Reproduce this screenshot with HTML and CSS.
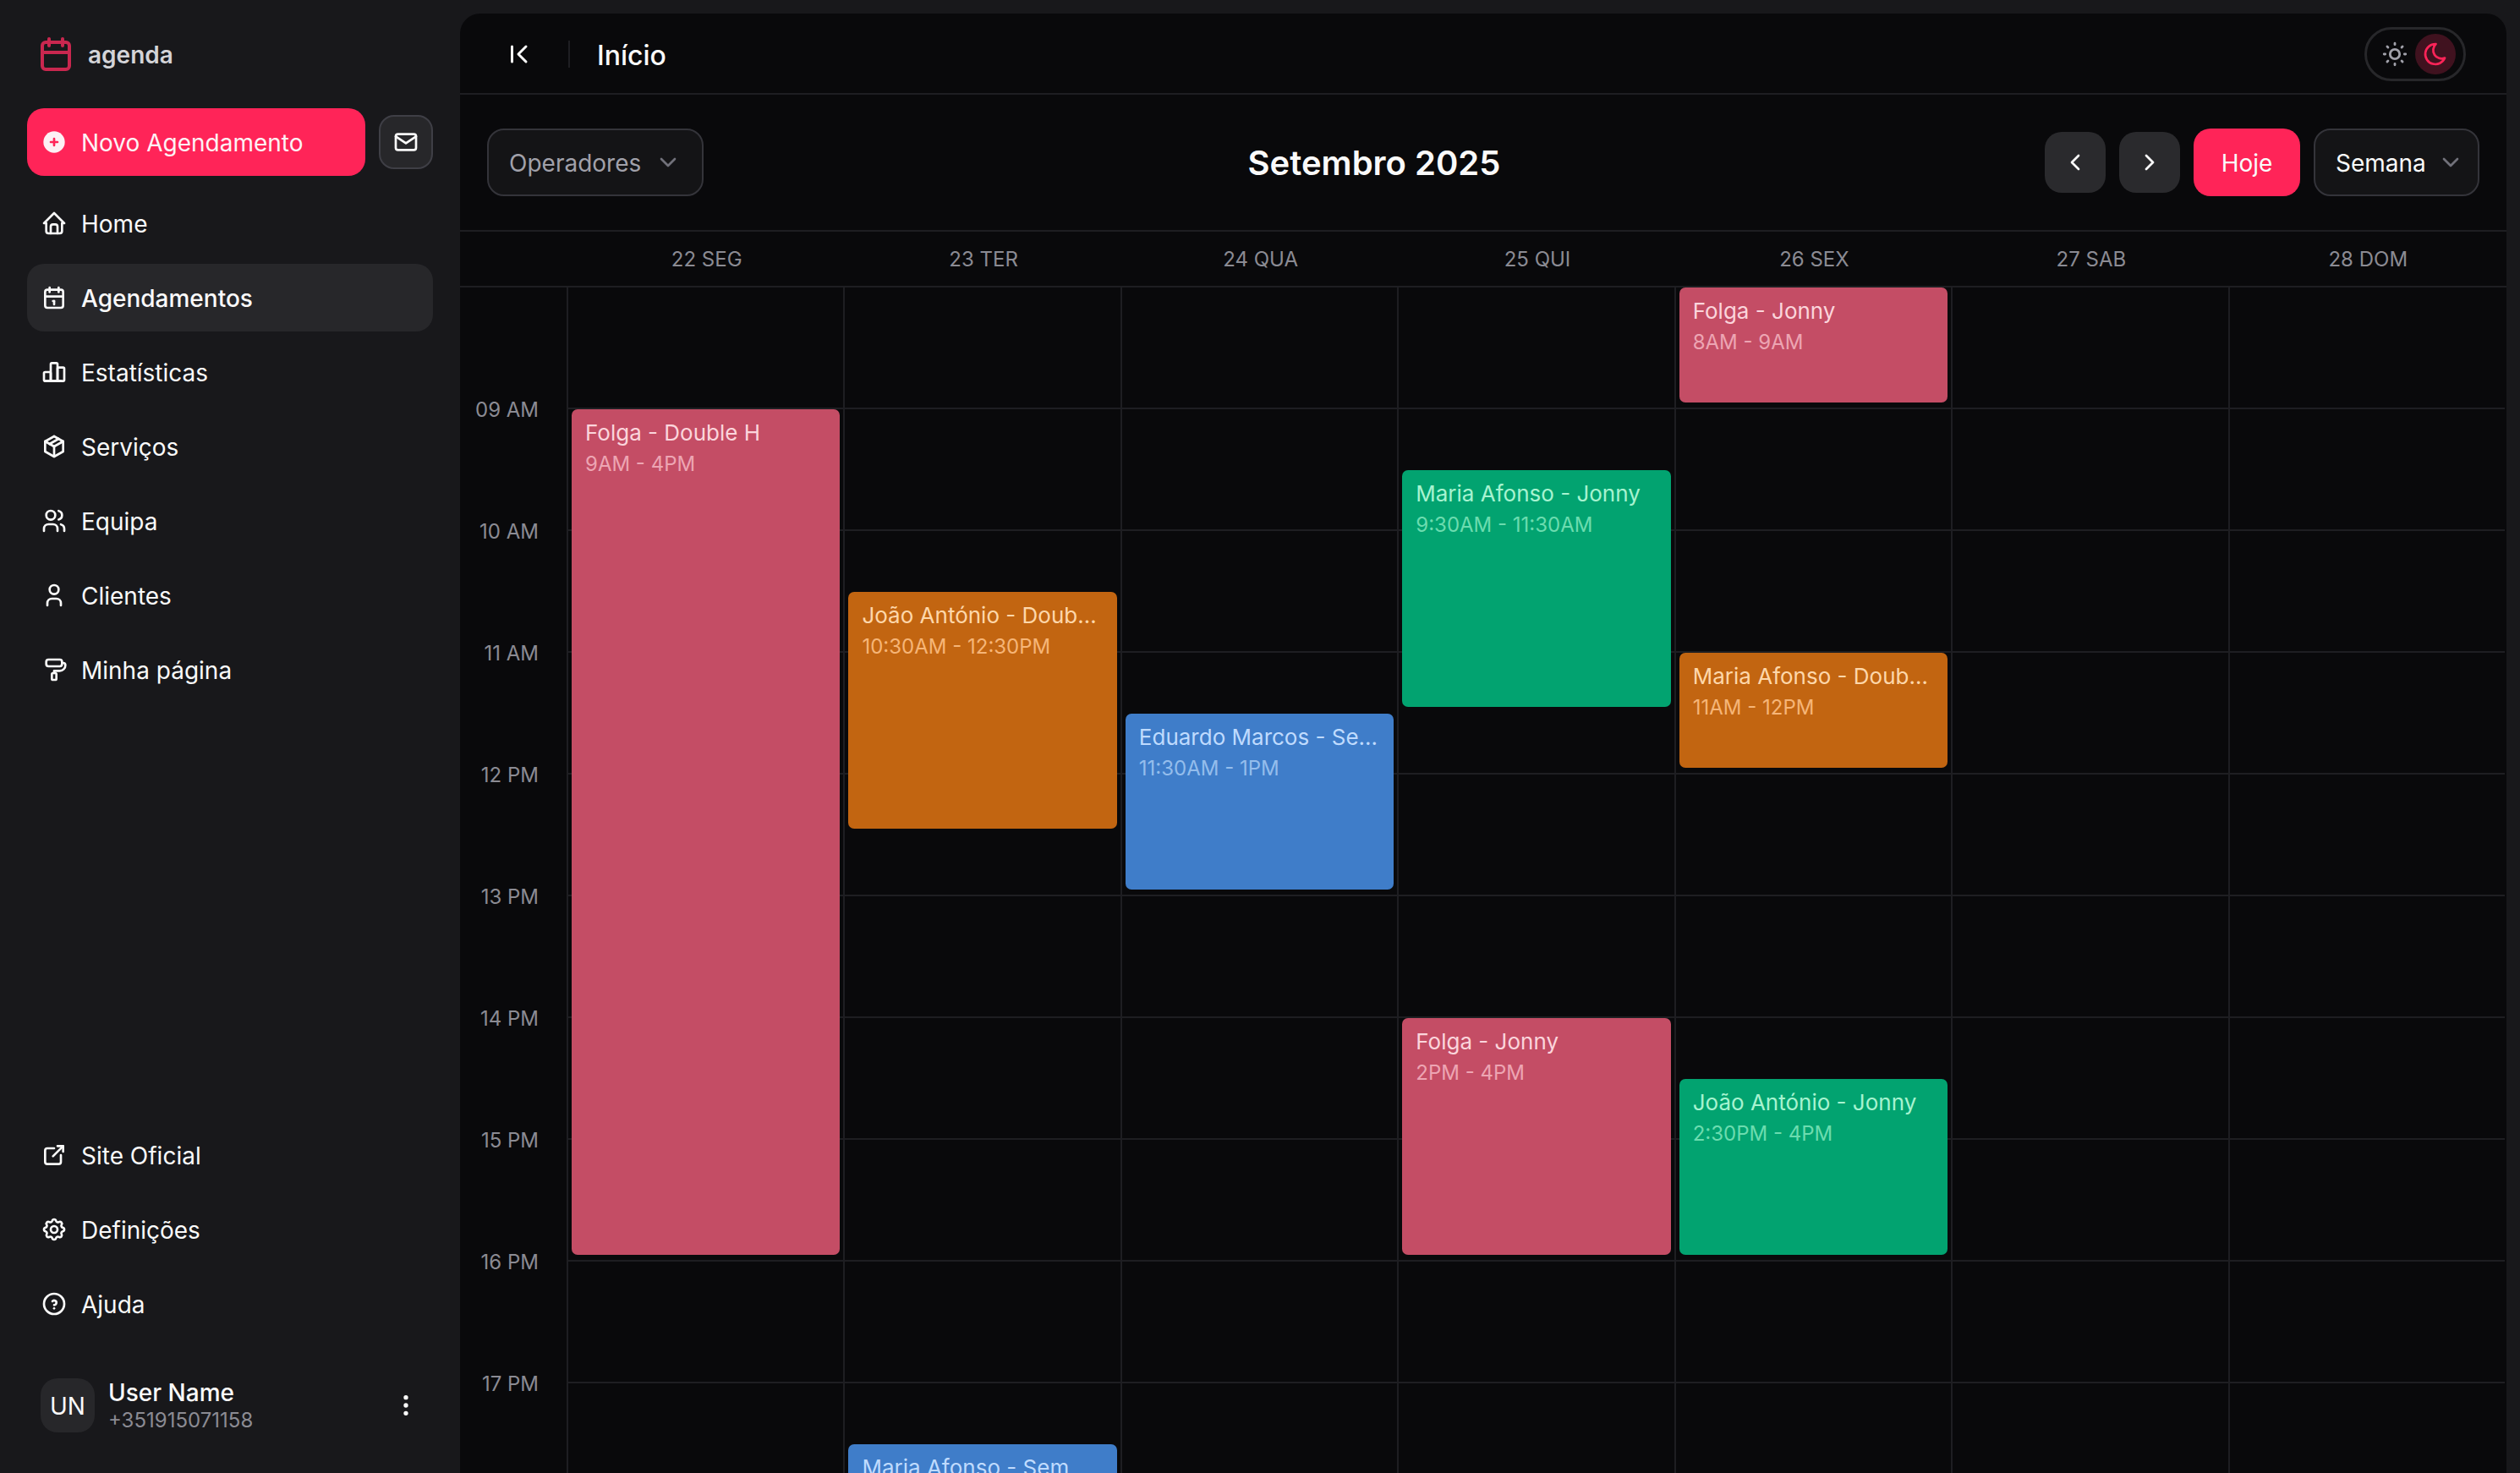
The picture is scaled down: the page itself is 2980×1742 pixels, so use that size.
FILE: index.html
```html
<!DOCTYPE html>
<html lang="pt">
<head>
<meta charset="utf-8">
<title>agenda</title>
<link rel="stylesheet" href="styles.css">
</head>
<body>
<div class="app">
  <aside class="sidebar">
    <div class="brand">
      <svg class="logo" viewBox="0 0 24 24"><path d="M4 7a2 2 0 0 1 2 -2h12a2 2 0 0 1 2 2v12a2 2 0 0 1 -2 2h-12a2 2 0 0 1 -2 -2z"/><path d="M16 3v4"/><path d="M8 3v4"/><path d="M4 11h16"/></svg>
      <span class="brand-name label">agenda</span>
    </div>
    <div class="new-row">
      <button class="new-btn">
        <svg class="icon" viewBox="0 0 24 24"><circle class="plus-disc" cx="12" cy="12" r="9.5"/><path class="plus-mark" d="M12 9v6M9 12h6"/></svg>
        <span class="label">Novo Agendamento</span>
      </button>
      <button class="mail-btn">
        <svg class="icon" viewBox="0 0 24 24"><path d="M3 7a2 2 0 0 1 2 -2h14a2 2 0 0 1 2 2v10a2 2 0 0 1 -2 2h-14a2 2 0 0 1 -2 -2v-10z"/><path d="M3 7l9 6l9 -6"/></svg>
      </button>
    </div>
    <nav class="nav">
      <a class="nav-item"><svg class="icon" viewBox="0 0 24 24"><path d="M5 12l-2 0l9 -9l9 9l-2 0"/><path d="M5 12v7a2 2 0 0 0 2 2h10a2 2 0 0 0 2 -2v-7"/><path d="M9 21v-6a2 2 0 0 1 2 -2h2a2 2 0 0 1 2 2v6"/></svg><span class="label">Home</span></a>
      <a class="nav-item active"><svg class="icon" viewBox="0 0 24 24"><path d="M4 7a2 2 0 0 1 2 -2h12a2 2 0 0 1 2 2v12a2 2 0 0 1 -2 2h-12a2 2 0 0 1 -2 -2z"/><path d="M16 3v4"/><path d="M8 3v4"/><path d="M4 11h16"/><path d="M11 15h1"/><path d="M12 15v3"/></svg><span class="label">Agendamentos</span></a>
      <a class="nav-item"><svg class="icon" viewBox="0 0 24 24"><path d="M3 13a1 1 0 0 1 1 -1h4a1 1 0 0 1 1 1v6a1 1 0 0 1 -1 1h-4a1 1 0 0 1 -1 -1z"/><path d="M15 9a1 1 0 0 1 1 -1h4a1 1 0 0 1 1 1v10a1 1 0 0 1 -1 1h-4a1 1 0 0 1 -1 -1z"/><path d="M9 5a1 1 0 0 1 1 -1h4a1 1 0 0 1 1 1v14a1 1 0 0 1 -1 1h-4a1 1 0 0 1 -1 -1z"/><path d="M4 20h14"/></svg><span class="label">Estatísticas</span></a>
      <a class="nav-item"><svg class="icon" viewBox="0 0 24 24"><path d="M12 3l8 4.5v9l-8 4.5l-8 -4.5v-9l8 -4.5"/><path d="M12 12l8 -4.5"/><path d="M12 12v9"/><path d="M12 12l-8 -4.5"/><path d="M16 5.25l-8 4.5"/></svg><span class="label">Serviços</span></a>
      <a class="nav-item"><svg class="icon" viewBox="0 0 24 24"><path d="M5 7a4 4 0 1 0 8 0a4 4 0 1 0 -8 0"/><path d="M3 21v-2a4 4 0 0 1 4 -4h4a4 4 0 0 1 4 4v2"/><path d="M16 3.13a4 4 0 0 1 0 7.75"/><path d="M21 21v-2a4 4 0 0 0 -3 -3.85"/></svg><span class="label">Equipa</span></a>
      <a class="nav-item"><svg class="icon" viewBox="0 0 24 24"><path d="M8 7a4 4 0 1 0 8 0a4 4 0 0 0 -8 0"/><path d="M6 21v-2a4 4 0 0 1 4 -4h4a4 4 0 0 1 4 4v2"/></svg><span class="label">Clientes</span></a>
      <a class="nav-item"><svg class="icon" viewBox="0 0 24 24"><path d="M5 5a2 2 0 0 1 2 -2h10a2 2 0 0 1 2 2v2a2 2 0 0 1 -2 2h-10a2 2 0 0 1 -2 -2z"/><path d="M19 6h1a2 2 0 0 1 2 2a5 5 0 0 1 -5 5l-5 0v2"/><path d="M10 16a1 1 0 0 1 1 -1h2a1 1 0 0 1 1 1v4a1 1 0 0 1 -1 1h-2a1 1 0 0 1 -1 -1z"/></svg><span class="label">Minha página</span></a>
    </nav>
    <nav class="nav nav-bottom">
      <a class="nav-item"><svg class="icon" viewBox="0 0 24 24"><path d="M12 6h-6a2 2 0 0 0 -2 2v10a2 2 0 0 0 2 2h10a2 2 0 0 0 2 -2v-6"/><path d="M11 13l9 -9"/><path d="M15 4h5v5"/></svg><span class="label">Site Oficial</span></a>
      <a class="nav-item"><svg class="icon" viewBox="0 0 24 24"><path d="M10.325 4.317c.426 -1.756 2.924 -1.756 3.35 0a1.724 1.724 0 0 0 2.573 1.066c1.543 -.94 3.31 .826 2.37 2.37a1.724 1.724 0 0 0 1.065 2.572c1.756 .426 1.756 2.924 0 3.35a1.724 1.724 0 0 0 -1.066 2.573c.94 1.543 -.826 3.31 -2.37 2.37a1.724 1.724 0 0 0 -2.572 1.065c-.426 1.756 -2.924 1.756 -3.35 0a1.724 1.724 0 0 0 -2.573 -1.066c-1.543 .94 -3.31 -.826 -2.37 -2.37a1.724 1.724 0 0 0 -1.065 -2.572c-1.756 -.426 -1.756 -2.924 0 -3.35a1.724 1.724 0 0 0 1.066 -2.573c-.94 -1.543 .826 -3.31 2.37 -2.37c1 .608 2.296 .07 2.572 -1.065z"/><path d="M9 12a3 3 0 1 0 6 0a3 3 0 0 0 -6 0"/></svg><span class="label">Definições</span></a>
      <a class="nav-item"><svg class="icon" viewBox="0 0 24 24"><path d="M3 12a9 9 0 1 0 18 0a9 9 0 0 0 -18 0"/><path d="M12 16v.01"/><path d="M12 13a2 2 0 0 0 .914 -3.782a1.98 1.98 0 0 0 -2.414 .483"/></svg><span class="label">Ajuda</span></a>
    </nav>
    <div class="user">
      <div class="avatar"><span class="label">UN</span></div>
      <div class="user-info label">
        <div class="user-name">User Name</div>
        <div class="user-phone">+351915071158</div>
      </div>
      <svg class="icon" viewBox="0 0 24 24"><circle cx="12" cy="5" r="1"/><circle cx="12" cy="12" r="1"/><circle cx="12" cy="19" r="1"/></svg>
    </div>
  </aside>

  <main class="main">
    <header class="topbar">
      <svg class="icon collapse" viewBox="0 0 24 24"><path d="M7 6v12"/><path d="M18 6l-6 6l6 6"/></svg>
      <span class="topbar-sep"></span>
      <h1 class="page-title label">Início</h1>
      <div class="theme-toggle">
        <span class="theme-opt"><svg class="icon sun" viewBox="0 0 24 24"><path d="M8 12a4 4 0 1 0 8 0a4 4 0 1 0 -8 0"/><path d="M3 12h1m8 -9v1m8 8h1m-9 8v1m-6.4 -15.4l.7 .7m12.1 -.7l-.7 .7m0 11.4l.7 .7m-12.1 -.7l-.7 .7"/></svg></span>
        <span class="theme-opt on"><svg class="icon" viewBox="0 0 24 24"><path d="M12 3c.132 0 .263 0 .393 0a7.5 7.5 0 0 0 7.92 12.446a9 9 0 1 1 -8.313 -12.454z"/></svg></span>
      </div>
    </header>

    <section class="toolbar">
      <button class="select muted"><span class="label">Operadores</span><svg class="icon" viewBox="0 0 24 24"><path d="M6 9l6 6l6 -6"/></svg></button>
      <h2 class="month">Setembro 2025</h2>
      <div class="controls">
        <button class="step"><svg class="icon" viewBox="0 0 24 24"><path d="M15 6l-6 6l6 6"/></svg></button>
        <button class="step"><svg class="icon" viewBox="0 0 24 24"><path d="M9 6l6 6l-6 6"/></svg></button>
        <button class="today label">Hoje</button>
        <button class="select week"><span class="label">Semana</span><svg class="icon" viewBox="0 0 24 24"><path d="M6 9l6 6l6 -6"/></svg></button>
      </div>
    </section>

    <div class="days">
      <span></span>
      <span>22 SEG</span><span>23 TER</span><span>24 QUA</span><span>25 QUI</span><span>26 SEX</span><span>27 SAB</span><span>28 DOM</span>
    </div>

    <div class="grid">
      <div class="hours">
        <span>09 AM</span><span>10 AM</span><span>11 AM</span><span>12 PM</span><span>13 PM</span><span>14 PM</span><span>15 PM</span><span>16 PM</span><span>17 PM</span>
      </div>
      <div class="day">
        <div class="event rose" style="top:144px;height:1000px"><div class="ev-title">Folga - Double H</div><div class="ev-time">9AM - 4PM</div></div>
      </div>
      <div class="day">
        <div class="event orange" style="top:360px;height:280px"><div class="ev-title">João António - Double H</div><div class="ev-time">10:30AM - 12:30PM</div></div>
        <div class="event blue" style="top:1368px;height:280px"><div class="ev-title">Maria Afonso - Sem</div><div class="ev-time">5:30PM - 7:30PM</div></div>
      </div>
      <div class="day">
        <div class="event blue" style="top:504px;height:208px"><div class="ev-title">Eduardo Marcos - Sem preferência</div><div class="ev-time">11:30AM - 1PM</div></div>
      </div>
      <div class="day">
        <div class="event green" style="top:216px;height:280px"><div class="ev-title">Maria Afonso - Jonny</div><div class="ev-time">9:30AM - 11:30AM</div></div>
        <div class="event rose" style="top:864px;height:280px"><div class="ev-title">Folga - Jonny</div><div class="ev-time">2PM - 4PM</div></div>
      </div>
      <div class="day">
        <div class="event rose" style="top:0;height:136px"><div class="ev-title">Folga - Jonny</div><div class="ev-time">8AM - 9AM</div></div>
        <div class="event orange" style="top:432px;height:136px"><div class="ev-title">Maria Afonso - Double H</div><div class="ev-time">11AM - 12PM</div></div>
        <div class="event green" style="top:936px;height:208px"><div class="ev-title">João António - Jonny</div><div class="ev-time">2:30PM - 4PM</div></div>
      </div>
      <div class="day"></div>
      <div class="day"></div>
    </div>
  </main>
</div>
</body>
</html>
```

FILE: styles.css
```css
* { box-sizing: border-box; margin: 0; padding: 0; }
html, body { height: 100%; overflow: hidden; }
body {
  background: #18181b;
  color: #fafafa;
  font-family: Inter, "Liberation Sans", sans-serif;
  font-size: 28px;
}
button { font: inherit; color: inherit; border: 0; background: none; }
svg { display: block; flex: none; fill: none; stroke: currentColor; stroke-width: 2; stroke-linecap: round; stroke-linejoin: round; }
.icon { width: 32px; height: 32px; }
.label { padding-top: 2px; }

.app { display: flex; height: 1742px; }

.sidebar {
  width: 544px;
  flex: none;
  display: flex;
  flex-direction: column;
  padding: 0 32px 48px;
}
.brand { height: 128px; display: flex; align-items: center; gap: 14px; padding-left: 10px; }
.logo { width: 48px; height: 48px; color: #c9274f; }
.brand-name { font-weight: 600; color: #d4d4d8; }

.new-row { display: flex; align-items: center; gap: 16px; margin-bottom: 16px; }
.new-btn {
  width: 400px;
  height: 80px;
  display: flex;
  align-items: center;
  gap: 16px;
  padding-left: 16px;
  border-radius: 20px;
  background: #ff2458;
  color: #fdf2f5;
}
.plus-disc { fill: #fdf0f4; stroke: none; }
.plus-mark { stroke: #ff2458; stroke-width: 2; }
.mail-btn {
  width: 64px;
  height: 64px;
  display: flex;
  align-items: center;
  justify-content: center;
  border: 2px solid #3f3f46;
  border-radius: 18px;
  background: #27272a;
}

.nav { display: flex; flex-direction: column; gap: 8px; }
.nav-bottom { margin-top: auto; margin-bottom: 48px; }
.nav-item {
  height: 80px;
  display: flex;
  align-items: center;
  gap: 16px;
  padding-left: 16px;
  border-radius: 20px;
}
.nav-item.active { background: #27272a; font-weight: 500; }

.user { height: 64px; display: flex; align-items: center; gap: 16px; padding: 0 16px; }
.avatar {
  width: 64px;
  height: 64px;
  flex: none;
  display: flex;
  align-items: center;
  justify-content: center;
  border-radius: 20px;
  background: #27272a;
}
.user-info { flex: 1; }
.user-name { font-weight: 500; line-height: 34px; }
.user-phone { font-size: 24px; line-height: 32px; color: #8b8b93; }

.main {
  flex: 1;
  min-width: 0;
  margin: 16px 16px 0 0;
  border-radius: 24px 24px 0 0;
  background: #09090b;
  overflow: hidden;
}

.topbar {
  height: 96px;
  padding: 2px 48px 0 51px;
  display: flex;
  align-items: center;
  border-bottom: 2px solid #1e1e22;
}
.collapse { width: 36px; height: 36px; }
.topbar-sep { width: 2px; height: 32px; margin: 0 32px 0 41px; background: #1e1e22; }
.page-title { font-size: 32px; font-weight: 500; flex: 1; }
.theme-toggle {
  width: 120px;
  height: 64px;
  display: flex;
  align-items: center;
  justify-content: space-between;
  padding: 0 9px 0 16px;
  border: 3px solid #27272a;
  border-radius: 32px;
}
.sun { width: 34px; height: 34px; }
.theme-opt { display: flex; align-items: center; justify-content: center; color: #a1a1aa; }
.theme-opt.on { width: 48px; height: 48px; border-radius: 50%; background: #40121f; color: #ff2458; }

.toolbar {
  height: 162px;
  padding: 0 32px;
  display: flex;
  align-items: center;
  justify-content: space-between;
  border-bottom: 2px solid #1e1e22;
}
.select {
  height: 80px;
  display: flex;
  align-items: center;
  justify-content: space-between;
  padding: 0 16px 0 24px;
  border: 2px solid #34343a;
  border-radius: 20px;
  background: #141416;
}
.select svg { color: #71717a; }
.select.muted { width: 256px; padding-right: 24px; color: #a1a1aa; }
.select.week { width: 196px; }
.month { font-size: 40px; font-weight: 600; }
.controls { display: flex; align-items: center; gap: 16px; }
.step {
  width: 72px;
  height: 72px;
  display: flex;
  align-items: center;
  justify-content: center;
  border-radius: 20px;
  background: #2a2a2d;
}
.today { width: 126px; height: 80px; border-radius: 20px; background: #ff2458; }

.days {
  height: 66px;
  display: grid;
  grid-template-columns: 128px repeat(7, 1fr);
  align-items: center;
  text-align: center;
  font-size: 24px;
  color: #8b8b93;
  border-bottom: 2px solid #1e1e22;
}

.grid { display: grid; grid-template-columns: 126px repeat(7, 1fr); height: 1402px; padding-right: 2px; }
.hours {
  display: flex;
  flex-direction: column;
  padding: 73px 33px 0 0;
  font-size: 24px;
  color: #8b8b93;
  text-align: right;
}
.hours span { flex: none; height: 144px; line-height: 144px; }
.day {
  position: relative;
  border-left: 2px solid #1e1e22;
  background: linear-gradient(to top, #1e1e22 2px, transparent 2px) 0 0 / 100% 144px;
}
.event {
  position: absolute;
  left: 4px;
  right: 4px;
  padding: 13px 18px 13px 16px;
  border-radius: 7px;
  overflow: hidden;
}
.ev-title { font-size: 26px; line-height: 30px; white-space: nowrap; overflow: hidden; text-overflow: ellipsis; }
.ev-time { font-size: 24px; line-height: 32px; margin-top: 6px; white-space: nowrap; }
.rose { background: #c44d65; color: #fbd5dc; }
.rose .ev-time { color: #eda5b3; }
.orange { background: #c26511; color: #fed7aa; }
.orange .ev-time { color: #f6b577; }
.green { background: #02a370; color: #a7f3d0; }
.green .ev-time { color: #6bdcaf; }
.blue { background: #3f7dc9; color: #bfdbfe; }
.blue .ev-time { color: #94bdec; }
```
